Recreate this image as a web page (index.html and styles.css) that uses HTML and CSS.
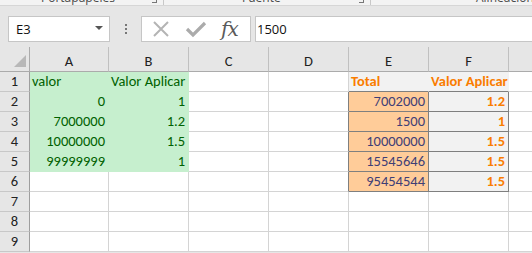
FILE: index.html
```html
<!DOCTYPE html>
<html lang="es">
<head>
<meta charset="utf-8">
<title>Hoja</title>
<link rel="stylesheet" href="styles.css">
</head>
<body>
<div class="app">
  <div class="ribbon">
    <div class="group g1"><span class="glabel">Portapapeles</span><span class="launch"></span></div>
    <div class="group g2"><span class="glabel">Fuente</span><span class="launch"></span></div>
    <div class="group g3"><span class="glabel">Alineación</span></div>
  </div>
  <div class="fbar">
    <div class="namebox"><span>E3</span><span class="caret"></span></div>
    <div class="dots"><i></i><i></i><i></i></div>
    <div class="fbtns">
      <svg class="ico" width="20" height="20" viewBox="0 0 20 20"><path d="M3 3 L17 17 M17 3 L3 17" stroke="#b4b4b4" stroke-width="2" fill="none"/></svg>
      <svg class="ico" width="22" height="20" viewBox="0 0 22 20"><path d="M2 10 L8 16 L20 4" stroke="#ababab" stroke-width="3.2" fill="none"/></svg>
      <span class="fx">fx</span>
    </div>
    <div class="finput">1500</div>
  </div>
  <div class="sheet">
    <div class="hc corner"><span class="tri"></span></div>
    <div class="hc">A</div><div class="hc">B</div><div class="hc">C</div><div class="hc">D</div><div class="hc">E</div><div class="hc">F</div><div class="hc last"></div>

    <div class="rh">1</div>
    <div class="c g">valor</div><div class="c g">Valor Aplicar</div><div class="c"></div><div class="c"></div>
    <div class="c hd bb">Total</div><div class="c hd bb">Valor Aplicar</div><div class="c"></div>

    <div class="rh">2</div>
    <div class="c g n">0</div><div class="c g n">1</div><div class="c"></div><div class="c br"></div>
    <div class="c inp n">7002000</div><div class="c calc n">1.2</div><div class="c"></div>

    <div class="rh">3</div>
    <div class="c g n">7000000</div><div class="c g n">1.2</div><div class="c"></div><div class="c br"></div>
    <div class="c inp n">1500</div><div class="c calc n">1</div><div class="c"></div>

    <div class="rh">4</div>
    <div class="c g n">10000000</div><div class="c g n">1.5</div><div class="c"></div><div class="c br"></div>
    <div class="c inp n">10000000</div><div class="c calc n">1.5</div><div class="c"></div>

    <div class="rh">5</div>
    <div class="c g n">99999999</div><div class="c g n">1</div><div class="c"></div><div class="c br"></div>
    <div class="c inp n">15545646</div><div class="c calc n">1.5</div><div class="c"></div>

    <div class="rh">6</div>
    <div class="c"></div><div class="c"></div><div class="c"></div><div class="c br"></div>
    <div class="c inp n">95454544</div><div class="c calc n">1.5</div><div class="c"></div>

    <div class="rh">7</div>
    <div class="c"></div><div class="c"></div><div class="c"></div><div class="c"></div><div class="c"></div><div class="c"></div><div class="c"></div>
    <div class="rh">8</div>
    <div class="c"></div><div class="c"></div><div class="c"></div><div class="c"></div><div class="c"></div><div class="c"></div><div class="c"></div>
    <div class="rh">9</div>
    <div class="c"></div><div class="c"></div><div class="c"></div><div class="c"></div><div class="c"></div><div class="c"></div><div class="c"></div>
  </div>
</div>
</body>
</html>
```

FILE: styles.css
```css
* { box-sizing: border-box; }
html, body { margin: 0; padding: 0; background: #ffffff; }
body { width: 532px; height: 253px; overflow: hidden; font-family: Carlito, Lato, "Liberation Sans", sans-serif; }
.app { width: 532px; height: 253px; overflow: hidden; background: #e6e6e6; }

.ribbon { height: 6px; background: #f3f3f3; border-bottom: 1px solid #d6d6d6; display: flex; overflow: hidden; font-family: "Segoe UI", "Open Sans", sans-serif; font-size: 12px; color: #444; }
.group { position: relative; height: 6px; border-right: 1px solid #c8c8c8; }
.g1 { width: 164px; }
.g2 { width: 207px; }
.g3 { flex: 1; border-right: 0; }
.glabel { position: absolute; top: -9px; line-height: 14px; white-space: nowrap; color: #4a4a4a; }
.g1 .glabel { left: 41px; }
.g2 .glabel { left: 78px; }
.g3 .glabel { left: 105px; }
.launch { position: absolute; right: 6px; top: 0; width: 5px; height: 3px; border-right: 1px solid #777; border-bottom: 1px solid #777; }

.fbar { height: 41px; display: flex; align-items: flex-start; padding-top: 10px; padding-left: 8px; }
.namebox { width: 102px; height: 26px; background: #fff; border: 1px solid #c6c6c6; display: flex; align-items: center; justify-content: space-between; padding: 0 6px 0 7px; font-family: "Segoe UI", "Open Sans", sans-serif; font-size: 13px; color: #111; }
.caret { width: 0; height: 0; border-left: 4px solid transparent; border-right: 4px solid transparent; border-top: 4px solid #555; margin-bottom: 2px; }
.dots { width: 31px; height: 26px; display: flex; flex-direction: column; align-items: center; justify-content: center; gap: 2px; }
.dots i { display: block; width: 2px; height: 2px; background: #777; }
.fbtns { width: 110px; height: 26px; background: #fff; border: 1px solid #c6c6c6; display: flex; align-items: center; padding-left: 9px; gap: 14px; }
.fx { font-family: "DejaVu Serif", "Liberation Serif", serif; font-style: italic; font-size: 20px; color: #5a5a5a; letter-spacing: -1px; line-height: 20px; }
.finput { flex: 1; margin-left: 4px; height: 26px; background: #fff; border: 1px solid #c6c6c6; border-right: 0; padding-left: 1px; display: flex; align-items: center; font-family: "Segoe UI", "Open Sans", sans-serif; font-size: 13px; color: #111; }

.sheet { display: grid; grid-template-columns: 30px 79px 80px 80px 80px 80px 80px 24px; grid-template-rows: 25px repeat(9, 20px); background: #fff; font-size: 14.5px; }
.hc { background: #e6e6e6; border-right: 1px solid #c0c0c0; border-bottom: 1px solid #ababab; display: flex; align-items: flex-end; justify-content: center; padding-bottom: 1px; color: #222; font-size: 14.5px; }
.hc.last { border-right: 0; }
.corner { position: relative; border-right: 1px solid #ababab; }
.tri { position: absolute; right: 3px; bottom: 4px; width: 0; height: 0; border-left: 12px solid transparent; border-bottom: 12px solid #b8b8b8; }
.rh { background: #e6e6e6; border-right: 1px solid #9e9e9e; border-bottom: 1px solid #c8c8c8; display: flex; align-items: flex-end; justify-content: center; padding-bottom: 1px; color: #222; }
.c { border-right: 1px solid #d4d4d4; border-bottom: 1px solid #d4d4d4; display: flex; align-items: flex-end; padding: 0 3px 1px 2px; white-space: nowrap; overflow: visible; line-height: 17px; }
.n { justify-content: flex-end; }
.g { background: #c6efce; color: #006100; border-color: #c6efce; }
.hd { background: #f2f2f2; color: #fa7d00; font-weight: bold; border-right-color: #f2f2f2; }
.bb { border-bottom-color: #7f7f7f; }
.br { border-right-color: #7f7f7f; }
.inp { background: #ffcc99; color: #3f3f76; border-right-color: #7f7f7f; border-bottom-color: #7f7f7f; }
.calc { background: #f2f2f2; color: #fa7d00; font-weight: bold; border-right-color: #7f7f7f; border-bottom-color: #7f7f7f; }
```
